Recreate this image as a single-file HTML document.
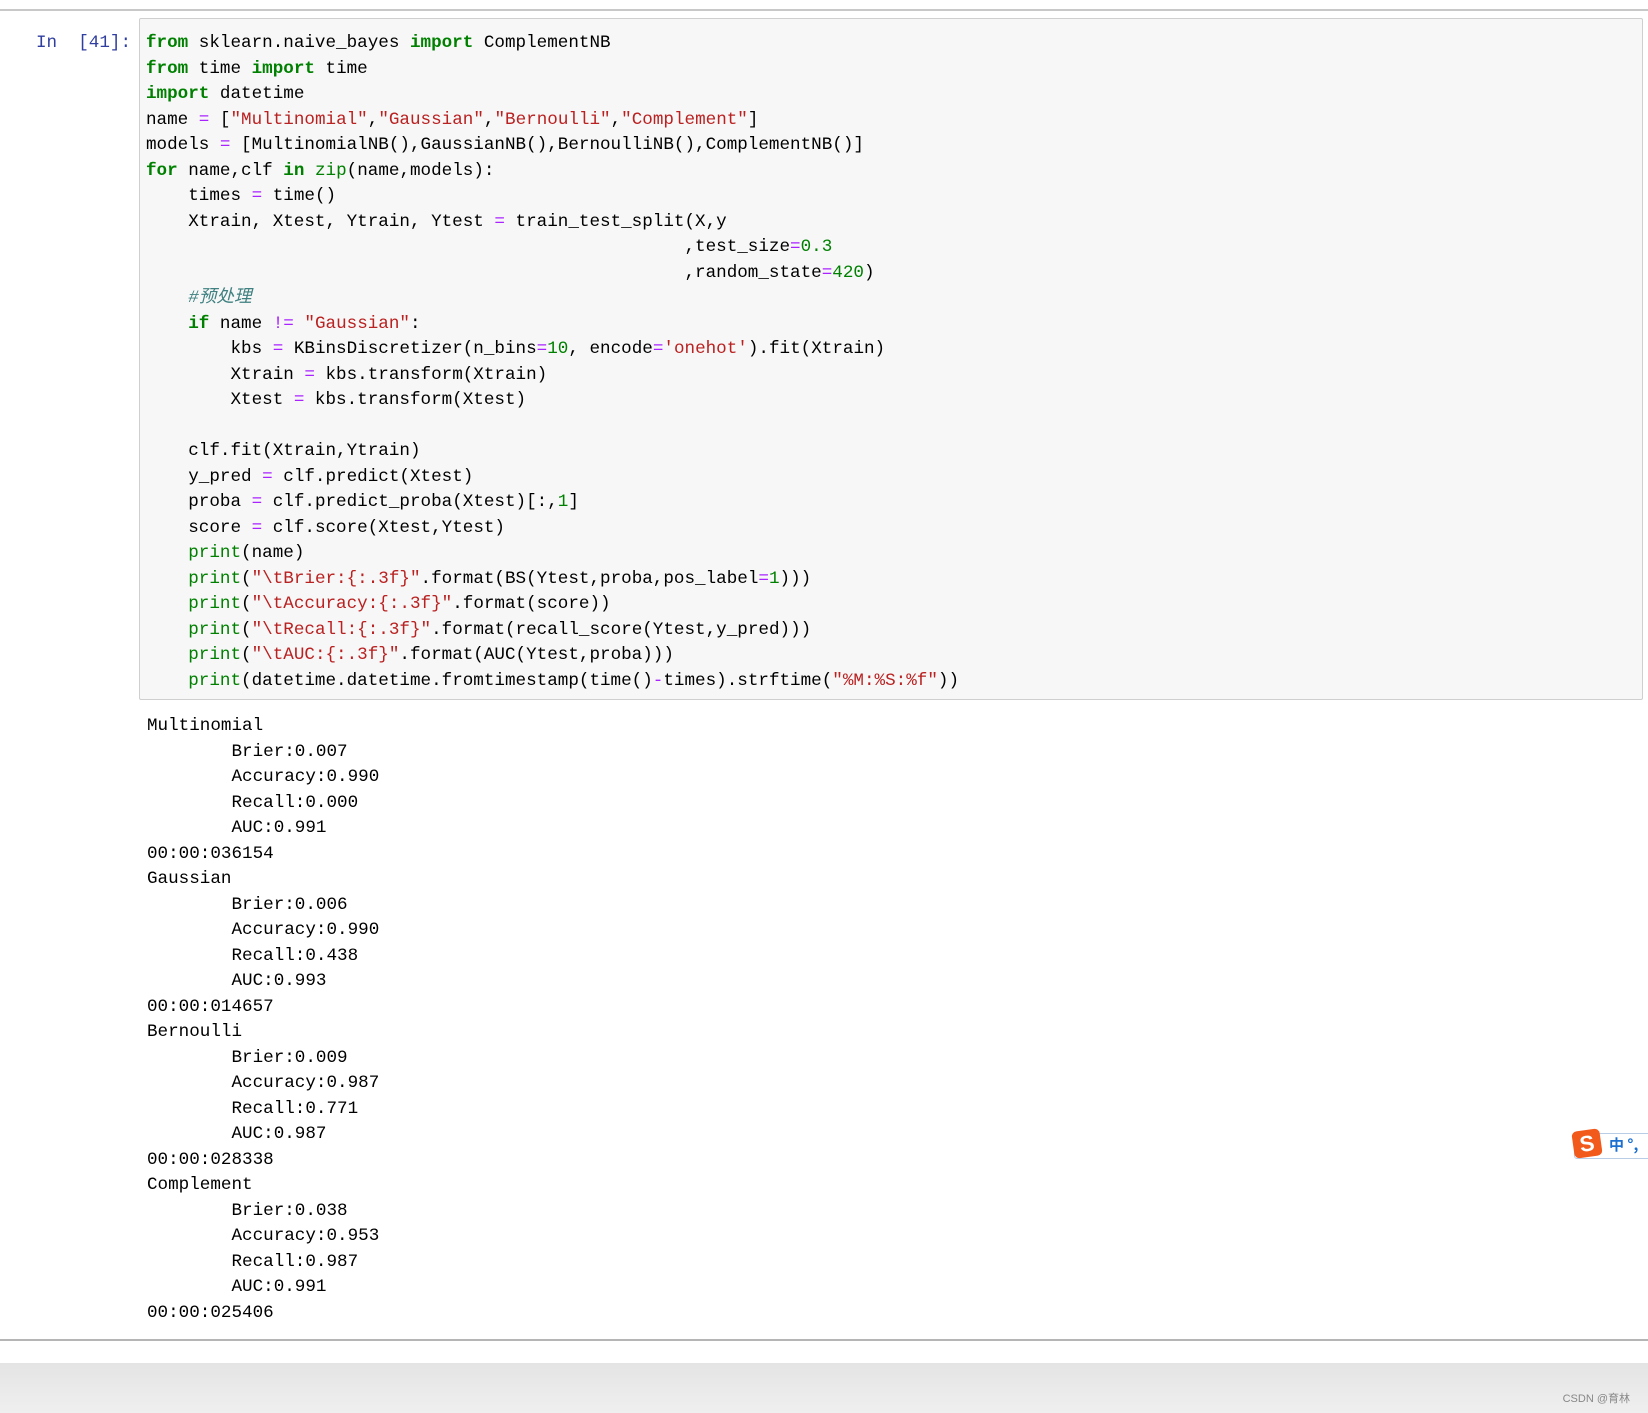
<!DOCTYPE html>
<html><head><meta charset="utf-8"><style>
html,body{margin:0;padding:0;background:#fff;width:1648px;height:1413px;overflow:hidden;position:relative}
.top{position:absolute;left:0;top:9px;width:1648px;height:2px;background:#c8c8c8}
.prompt{position:absolute;left:36px;top:31px;font:17.6px/25.5px "Liberation Mono","Noto Sans CJK SC",monospace;color:#303f9f;white-space:pre}
.box{position:absolute;left:139px;top:18px;width:1504px;height:682px;background:#f7f7f7;border:1px solid #cfcfcf;border-radius:2px;box-sizing:border-box}
pre{margin:0;font:17.6px/25.5px "Liberation Mono","Noto Sans CJK SC",monospace;color:#000;position:absolute;white-space:pre}
.code{left:146px;top:31px}
.out{left:147px;top:714px}
.k{color:#008000;font-weight:bold}.s{color:#ba2121}.o{color:#aa22ff}.n{color:#008000}.b{color:#008000}.c{color:#408080;font-style:italic}
.bot{position:absolute;left:0;top:1339px;width:1648px;height:2px;background:#b5b5b5}
.foot{position:absolute;left:0;top:1363px;width:1648px;height:50px;background:linear-gradient(#e4e4e4,#efefef)}
.csdn{position:absolute;right:18px;top:1390px;font:11px "Liberation Sans","Noto Sans CJK SC",sans-serif;color:#888}
.sg{position:absolute;left:1574px;top:1133px;width:80px;height:24px;border:1px solid #b9cde6;border-radius:3px;background:#fff}
.sgl{position:absolute;left:1573px;top:1130px;width:28px;height:27px;background:#f25a1c;border-radius:5px;transform:rotate(-8deg);color:#fff;font:bold 22px/27px "Liberation Sans",sans-serif;text-align:center}
.sgt{position:absolute;left:1609px;top:1135px;font:bold 15px/20px "Noto Sans CJK SC",sans-serif;color:#1a6fd0}
</style></head><body>
<div class="top"></div>
<div class="prompt">In  [41]:</div>
<div class="box"></div>
<pre class="code"><span class="k">from</span> sklearn.naive_bayes <span class="k">import</span> ComplementNB
<span class="k">from</span> time <span class="k">import</span> time
<span class="k">import</span> datetime
name <span class="o">=</span> [<span class="s">"Multinomial"</span>,<span class="s">"Gaussian"</span>,<span class="s">"Bernoulli"</span>,<span class="s">"Complement"</span>]
models <span class="o">=</span> [MultinomialNB(),GaussianNB(),BernoulliNB(),ComplementNB()]
<span class="k">for</span> name,clf <span class="k">in</span> <span class="b">zip</span>(name,models):
    times <span class="o">=</span> time()
    Xtrain, Xtest, Ytrain, Ytest <span class="o">=</span> train_test_split(X,y
                                                   ,test_size<span class="o">=</span><span class="n">0.3</span>
                                                   ,random_state<span class="o">=</span><span class="n">420</span>)
    <span class="c">#预处理</span>
    <span class="k">if</span> name <span class="o">!=</span> <span class="s">"Gaussian"</span>:
        kbs <span class="o">=</span> KBinsDiscretizer(n_bins<span class="o">=</span><span class="n">10</span>, encode<span class="o">=</span><span class="s">'onehot'</span>).fit(Xtrain)
        Xtrain <span class="o">=</span> kbs.transform(Xtrain)
        Xtest <span class="o">=</span> kbs.transform(Xtest)

    clf.fit(Xtrain,Ytrain)
    y_pred <span class="o">=</span> clf.predict(Xtest)
    proba <span class="o">=</span> clf.predict_proba(Xtest)[:,<span class="n">1</span>]
    score <span class="o">=</span> clf.score(Xtest,Ytest)
    <span class="b">print</span>(name)
    <span class="b">print</span>(<span class="s">"\tBrier:{:.3f}"</span>.format(BS(Ytest,proba,pos_label<span class="o">=</span><span class="n">1</span>)))
    <span class="b">print</span>(<span class="s">"\tAccuracy:{:.3f}"</span>.format(score))
    <span class="b">print</span>(<span class="s">"\tRecall:{:.3f}"</span>.format(recall_score(Ytest,y_pred)))
    <span class="b">print</span>(<span class="s">"\tAUC:{:.3f}"</span>.format(AUC(Ytest,proba)))
    <span class="b">print</span>(datetime.datetime.fromtimestamp(time()<span class="o">-</span>times).strftime(<span class="s">"%M:%S:%f"</span>))</pre>
<pre class="out">Multinomial
        Brier:0.007
        Accuracy:0.990
        Recall:0.000
        AUC:0.991
00:00:036154
Gaussian
        Brier:0.006
        Accuracy:0.990
        Recall:0.438
        AUC:0.993
00:00:014657
Bernoulli
        Brier:0.009
        Accuracy:0.987
        Recall:0.771
        AUC:0.987
00:00:028338
Complement
        Brier:0.038
        Accuracy:0.953
        Recall:0.987
        AUC:0.991
00:00:025406</pre>
<div class="bot"></div>
<div class="foot"></div>
<div class="csdn">CSDN @育林</div>
<div class="sg"></div>
<div class="sgl">S</div>
<div class="sgt">中 °,</div>
</body></html>
